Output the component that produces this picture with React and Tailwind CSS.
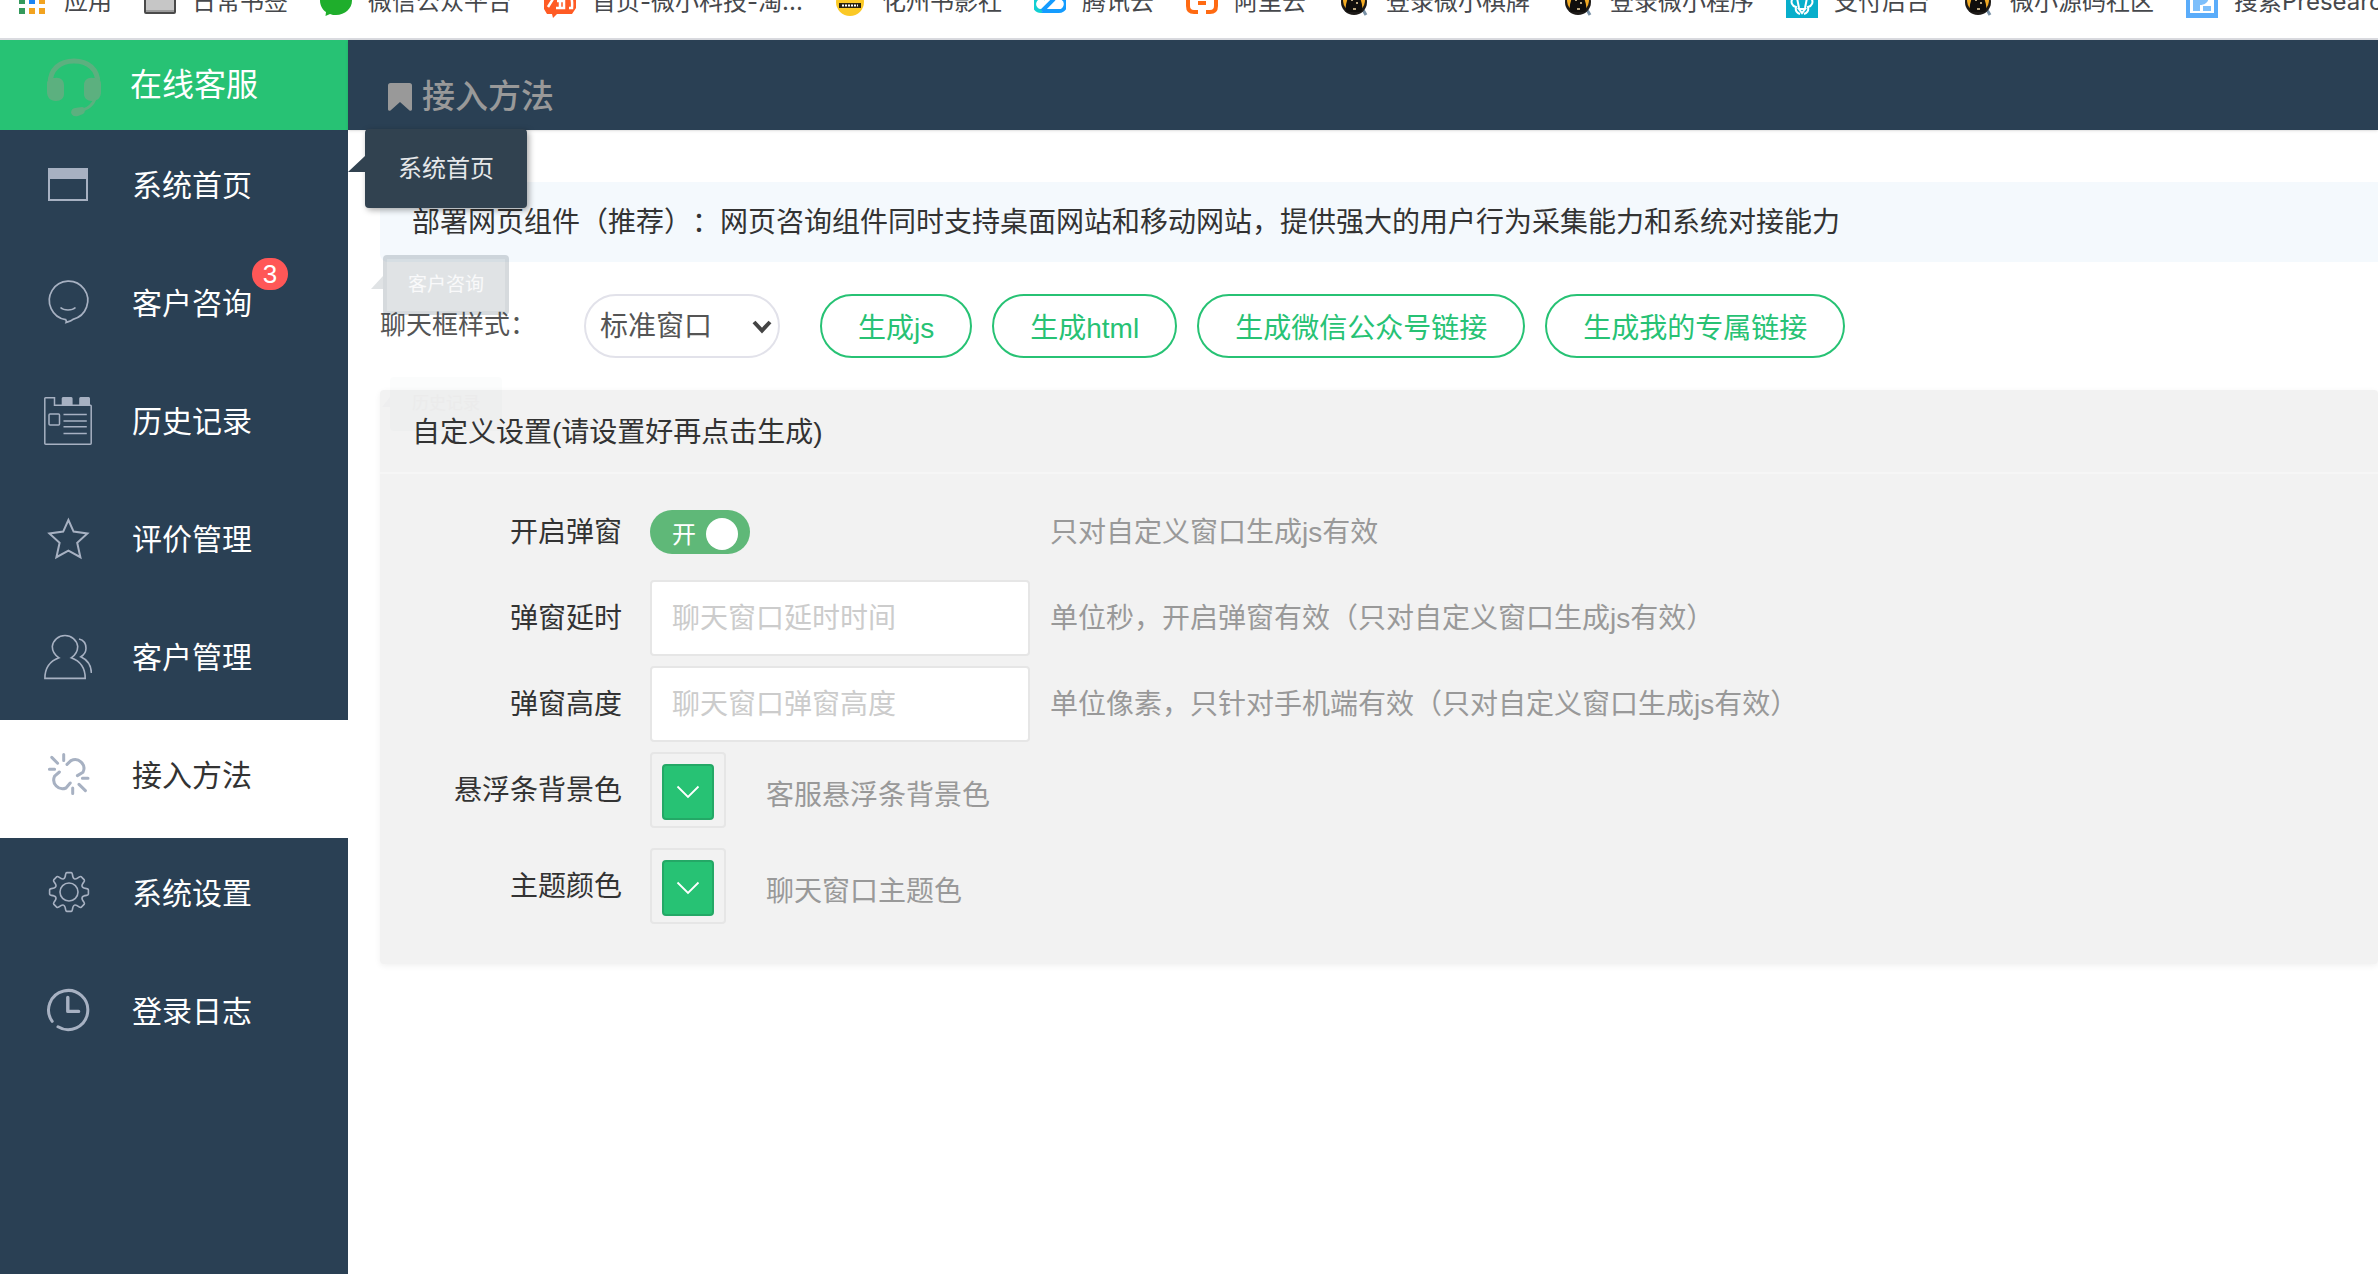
import { useState } from 'react'

const FORM_ROW = 'flex items-center'
const FORM_LABEL = 'w-[242px] shrink-0 pt-0.5 text-right text-[#333]'

// eight-tooth gear outline around (25, 23)
function gearPath() {
  const pt = (x, y, a) => {
    const c = Math.cos(a)
    const s = Math.sin(a)
    return `${(25 + x * c - y * s).toFixed(2)} ${(23 + x * s + y * c).toFixed(2)}`
  }
  let d = `M${pt(-2.2, -19.4, 0)}`
  for (let k = 0; k < 8; k++) {
    const a = (k * Math.PI) / 4
    const b = ((k + 1) * Math.PI) / 4
    d += `L${pt(2.2, -19.4, a)}Q${pt(3.2, -19.2, a)} ${pt(3.4, -17.6, a)}`
    d += `C${pt(4, -12.5, a)} ${pt(-4, -12.5, b)} ${pt(-3.4, -17.6, b)}`
    d += `Q${pt(-3.2, -19.2, b)} ${pt(-2.2, -19.4, b)}`
  }
  return d + 'Z'
}

const NAV_ICONS = {
  home: (
    <g>
      <rect x="5" y="8" width="38" height="31" strokeWidth="2" />
      <rect x="4" y="7" width="40" height="11" fill="currentColor" stroke="none" />
    </g>
  ),
  chat: (
    <g strokeWidth="1.7">
      <path d="M21.6 40.6A19.2 19.4 0 1 1 29 40.3C27 42 25 42.4 22.2 43.4C22.6 42.3 22.3 41.6 21.6 40.6Z" />
      <path d="M16.5 28.5C20 31.8 28 31.8 31.5 28.5" />
    </g>
  ),
  history: (
    <g strokeWidth="1.5">
      <path d="M1.5 .8H10.5V8.2H46.5Q47.2 8.2 47.2 9V46.2Q47.2 47.2 46.2 47.2H1.8Q.8 47.2 .8 46.2V1.5Q.8 .8 1.5 .8Z" />
      <path d="M17.7 8V1.5Q17.7 0 19 0H27.3Q28.6 0 28.6 1.5V8ZM35.2 8V1.5Q35.2 0 36.5 0H44.8Q46 0 46 1.5V8Z" fill="currentColor" stroke="none" />
      <rect x="5" y="17" width="10.5" height="11" rx="1" />
      <path d="M19.5 17.4H42.8M19.5 24H42.8M19.5 29.8H42.8M19.5 36.4H42.8" />
    </g>
  ),
  star: (
    <path
      strokeWidth="2"
      d="M24.4 5L29.6 16.6L43.4 18.4L33.2 27.8L36.4 42.2L24.4 35.6L12.4 42.2L15.6 27.8L5.4 18.4L19.2 16.6Z"
    />
  ),
  users: (
    <g strokeWidth="1.6">
      <path d="M15 24.8C10.5 21.8 8.3 18.2 8.3 13.4A12.8 12.5 0 0 1 33.7 13.4C33.7 18.2 31.6 21.8 27.2 24.8C36 28 41.2 34.5 41.2 45.4H.9C.9 34.5 6.2 28 15 24.8Z" />
      <path d="M35 6C39.2 7 42 10.5 42 15.3C42 18.8 40.2 21.8 36.8 23.8C42.5 26.5 47.2 31.5 47.4 40" />
    </g>
  ),
  link: (
    <g strokeWidth="3" strokeLinecap="round">
      <path d="M19.7 3.6V9.4M7.8 6.4L13.6 12.2M5.4 18.3H10.6M38.4 27.3H44M28.7 37V42.4M35 33.4L41.4 39.6" />
      <path d="M23 13.4L27 9.6A8.8 8.8 0 0 1 39 21.2L33.4 24.6M15.4 21L10.6 25.2A8.8 8.8 0 0 0 22 37L26.2 32" />
    </g>
  ),
  gear: (
    <g strokeWidth="1.6">
      <path d={gearPath()} />
      <circle cx="25" cy="23" r="9" />
    </g>
  ),
  clock: (
    <g strokeWidth="3" strokeLinecap="round">
      <path d="M8.2 34.4A19.6 19.6 0 1 1 14 39.8" />
      <path d="M23.8 10.4V24.4H34.6" strokeWidth="3.4" strokeLinejoin="round" />
    </g>
  ),
}

const NAV_ITEMS = [
  { icon: 'home', label: '系统首页' },
  { icon: 'chat', label: '客户咨询', badge: 3 },
  { icon: 'history', label: '历史记录' },
  { icon: 'star', label: '评价管理' },
  { icon: 'users', label: '客户管理' },
  { icon: 'link', label: '接入方法', active: true },
  { icon: 'gear', label: '系统设置' },
  { icon: 'clock', label: '登录日志' },
]

const NAV_TIPS = {
  系统首页: {
    box: '-top-px ml-[17px] h-[79px] w-[162px] rounded-sm bg-[#314250] text-2xl text-[#e6e8ea] shadow-[2px_2px_6px_rgba(0,0,0,0.35)]',
    arrow: 'top-[27px] h-4 w-[17px] bg-[#314250]',
  },
  客户咨询: {
    box: 'top-[7px] ml-[35px] h-[60px] w-[126px] rounded-sm border-4 border-[#2f4050]/5 bg-[#2f4050]/15 text-[19px] text-white/80',
    arrow: 'top-[17px] mr-1 h-[13px] w-3 bg-[#2f4050]/15',
  },
  历史记录: {
    box: 'top-[11px] ml-[42px] h-[54px] w-[112px] rounded-sm bg-[#2f6050]/2 text-[17px] text-[#ebebeb]',
    arrow: 'top-5 h-2.5 w-2 bg-[#2f4050]/2',
  },
}

function NavTip({ label }) {
  const tip = NAV_TIPS[label]
  if (!tip) return null
  return (
    <span
      role="tooltip"
      className={`pointer-events-none absolute left-full z-10 flex items-center justify-center whitespace-nowrap ${tip.box}`}
    >
      <span className={`absolute right-full [clip-path:polygon(100%_0,100%_100%,0_100%)] ${tip.arrow}`} />
      {label}
    </span>
  )
}

function NavItem({ item }) {
  return (
    <li className="relative">
      <a
        href="#"
        aria-current={item.active ? 'page' : undefined}
        className={`flex h-[118px] items-center gap-10 pb-2 pl-11 text-3xl ${
          item.active ? 'bg-white text-[#333]' : 'text-white'
        }`}
      >
        <svg viewBox="0 0 48 48" fill="none" stroke="currentColor" className="size-12 shrink-0 text-[#a7b1c2]">
          {NAV_ICONS[item.icon]}
        </svg>
        <span className="pt-0.5">{item.label}</span>
      </a>
      {item.badge ? (
        <span className="absolute left-[252px] top-2.5 flex h-8 w-9 items-center justify-center rounded-2xl bg-[#ff5757] text-[26px] text-white">
          {item.badge}
        </span>
      ) : null}
      <NavTip label={item.label} />
    </li>
  )
}

function Sidebar() {
  return (
    <aside className="w-[348px] shrink-0 bg-[#2a4054]">
      <div className="flex h-[90px] items-center gap-7 bg-[#27c274] pl-[46px] pt-1 text-[32px] text-white">
        <svg viewBox="0 0 56 60" fill="none" className="h-[60px] w-14 text-[#5cb07f]">
          <path d="M4 27C4 12 14 4 28 4S52 12 52 27" stroke="currentColor" strokeWidth="5" />
          <path d="M9 21C14 20 18 23 18 28V37C18 41 15 44 10 44C4 44 1 40 1 35V27C1 23 4 21 9 21Z" fill="currentColor" />
          <path d="M47 21C42 20 38 23 38 28V37C38 41 41 44 46 44C52 44 55 40 55 35V27C55 23 52 21 47 21Z" fill="currentColor" />
          <path d="M49 42C47 47 43 51 37 53" stroke="currentColor" strokeWidth="3" />
          <path d="M29 51L36 50C39 50 40 55 37 57L32 59C24 61 23 52 29 51Z" fill="currentColor" />
        </svg>
        <span className="pb-1">在线客服</span>
      </div>
      <nav>
        <ul>
          {NAV_ITEMS.map((item) => (
            <NavItem key={item.label} item={item} />
          ))}
        </ul>
      </nav>
    </aside>
  )
}

const BOOKMARKS = [
  { icon: 'apps', label: '应用' },
  { icon: 'folder', label: '日常书签' },
  { icon: 'wechat', label: '微信公众平台' },
  { icon: 'taobao', label: '首页-微小科技-淘...', wide: true },
  { icon: 'books', label: '化州书影社' },
  { icon: 'tencent', label: '腾讯云' },
  { icon: 'aliyun', label: '阿里云' },
  { icon: 'ninja', label: '登录微小棋牌' },
  { icon: 'ninja', label: '登录微小程序' },
  { icon: 'lion', label: '支付后台' },
  { icon: 'ninja', label: '微小源码社区' },
  { icon: 'presearch', label: '搜索Presearch' },
]

const BOOKMARK_ICONS = {
  apps: (
    <g>
      <path d="M3 12h6v6H3zM3 22h6v6H3z" fill="#34995c" />
      <path d="M13 12h6v6h-6z" fill="#1a84f5" />
      <path d="M23 12h6v6h-6zM13 22h6v6h-6zM23 22h6v6h-6z" fill="#f2a320" />
    </g>
  ),
  folder: (
    <g>
      <path d="M1 6h30v20q0 1-1 1H2q-1 0-1-1z" fill="#c6c6c6" stroke="#4a4a4a" strokeWidth="2" />
      <path d="M2 24h28v2H2z" fill="#9b9b9b" />
    </g>
  ),
  wechat: <path d="M16 0C7 0 0 6 0 14.500C0 20 3 24 6 26L5.500 30L10 28C12 29 14 29 16 29C25 29 32 22.500 32 14.500S25 0 16 0Z" fill="#1fae2c" />,
  taobao: (
    <g>
      <path d="M4 0h24l4 5v17l-4 6H13l-4 4l-1-4H3l-3-5V4z" fill="#ff5b24" />
      <path d="M5 10l4 3l-5 8M11 12l9-2M13 15h7v7h-8M16 11v10M23 10q6-2 5 12h-3" fill="none" stroke="#fff" strokeWidth="2.500" />
    </g>
  ),
  books: (
    <g>
      <circle cx="16" cy="16" r="14" fill="#fbc926" />
      <path d="M5 9h22v4H5zM5 17h22v5H5z" fill="#292313" />
      <path d="M8 19.500h16" stroke="#fff" strokeWidth="2" strokeDasharray="2 1" />
    </g>
  ),
  tencent: (
    <g fill="none" strokeWidth="4">
      <path d="M12 13A7 7 0 1 0 8 25" stroke="#12cfd2" />
      <path d="M8 25L19 14A7 7 0 1 1 24 25H8" stroke="#149cff" />
    </g>
  ),
  aliyun: (
    <path d="M12 4H8Q2 4 2 10V20Q2 26 8 26H12M20 4H24Q30 4 30 10V20Q30 26 24 26H20M12 17H20" fill="none" stroke="#ff6a12" strokeWidth="4" />
  ),
  ninja: (
    <g>
      <path d="M24 22L28 29" stroke="#7890a5" strokeWidth="3" />
      <ellipse cx="16" cy="16" rx="13" ry="13" fill="#1d1a18" />
      <ellipse cx="16" cy="14" rx="11" ry="12" fill="#f3ab23" />
      <path d="M8 0h16l-2 12q4 10 1 14h-14q-3-4 1-14z" fill="#100e0c" />
      <path d="M13 14h2M18 17h2M15 23h3" stroke="#f1d7a2" strokeWidth="1.500" />
    </g>
  ),
  lion: (
    <g>
      <path d="M0 0h32v32H0z" fill="#08aecb" />
      <path d="M7 12C4 16 6 20 10 21C9 25 11 27 14 28M25 12C28 16 26 20 22 21C23 25 21 27 18 28M11 12l2 10M21 12l-2 10M13 23h6l-3 4z" fill="none" stroke="#fff" strokeWidth="2" />
    </g>
  ),
  presearch: (
    <g>
      <path d="M0 0h32v32H0z" fill="#5aacfa" />
      <path d="M4 4h24v23H4z" fill="#fff" />
      <path d="M7 4v21h7v-6c11 0 12-14 0-15zM17 20h8v5h-8z" fill="#7dbffb" />
    </g>
  ),
}

function BookmarksBar() {
  return (
    <div className="flex h-10 items-end overflow-hidden border-b-2 border-[#dadbe0] bg-white pb-5 pl-4">
      <ul className="flex h-8 items-center gap-8 whitespace-nowrap font-['Inter','Noto_Sans_CJK_SC',sans-serif] text-2xl leading-8 text-[#46484c]">
        {BOOKMARKS.map((b) => (
          <li key={b.label} className="shrink-0">
            <a href="#" className="flex items-center gap-4">
              <svg viewBox="0 0 32 32" className="size-8">
                {BOOKMARK_ICONS[b.icon]}
              </svg>
              <span className={b.wide ? 'w-[210px]' : ''}>{b.label}</span>
            </a>
          </li>
        ))}
      </ul>
    </div>
  )
}

function ColorPicker({ id }) {
  return (
    <div className="h-[76px] rounded-sm border-2 border-[#e6e6e6] px-2.5 pt-2.5">
      <button
        id={id}
        type="button"
        className="flex h-14 w-[52px] items-center justify-center rounded border-2 border-[#24a866] bg-[#27c274]"
      >
        <svg viewBox="0 0 24 14" fill="none" stroke="#fff" strokeWidth="1.800" className="h-3.5 w-6">
          <path d="M1.500 1.500L12 12L22.500 1.500" />
        </svg>
      </button>
    </div>
  )
}

function TextRow({ id, label, placeholder, hint }) {
  return (
    <div className={FORM_ROW}>
      <label htmlFor={id} className={FORM_LABEL}>
        {label}
      </label>
      <input
        id={id}
        type="text"
        placeholder={placeholder}
        className="ml-7 h-[76px] w-[380px] rounded-sm border-2 border-[#e6e6e6] bg-white px-5 pt-0.5 placeholder:text-[#ccc]"
      />
      <span className="ml-5 pt-0.5 text-[#999]">{hint}</span>
    </div>
  )
}

function ColorRow({ id, label, hint }) {
  return (
    <div className={FORM_ROW}>
      <label htmlFor={id} className={FORM_LABEL}>
        {label}
      </label>
      <div className="ml-7">
        <ColorPicker id={id} />
      </div>
      <span className="ml-10 pt-3 text-[#999]">{hint}</span>
    </div>
  )
}

function SettingsPanel() {
  const [popup, setPopup] = useState(true)
  return (
    <section className="mt-8 rounded bg-[#f2f2f2] pb-10 text-[28px] text-[#333] shadow-[0_2px_6px_rgba(0,0,0,0.06)]">
      <h2 className="flex h-[84px] items-center border-b-2 border-[#f6f6f6] px-8 pt-1">自定义设置(请设置好再点击生成)</h2>
      <div className="space-y-2.5 pt-5">
        <div className={`${FORM_ROW} h-[76px]`}>
          <label htmlFor="popup" className={FORM_LABEL}>
            开启弹窗
          </label>
          <label
            className={`ml-7 flex h-11 w-[100px] cursor-pointer items-center gap-2.5 rounded-full pl-[22px] text-2xl text-white ${
              popup ? 'bg-[#5fb878]' : 'bg-[#d2d2d2]'
            }`}
          >
            <input
              id="popup"
              type="checkbox"
              role="switch"
              checked={popup}
              onChange={(e) => setPopup(e.target.checked)}
              className="sr-only"
            />
            <span className="pt-1.5">{popup ? '开' : '关'}</span>
            <span className="mt-1 size-8 rounded-full bg-white" />
          </label>
          <span className="ml-[300px] pt-0.5 text-[#999]">只对自定义窗口生成js有效</span>
        </div>
        <TextRow
          id="delay"
          label="弹窗延时"
          placeholder="聊天窗口延时时间"
          hint="单位秒，开启弹窗有效（只对自定义窗口生成js有效）"
        />
        <TextRow
          id="height"
          label="弹窗高度"
          placeholder="聊天窗口弹窗高度"
          hint="单位像素，只针对手机端有效（只对自定义窗口生成js有效）"
        />
        <div className="space-y-5">
          <ColorRow id="bar-color" label="悬浮条背景色" hint="客服悬浮条背景色" />
          <ColorRow id="theme-color" label="主题颜色" hint="聊天窗口主题色" />
        </div>
      </div>
    </section>
  )
}

const GENERATE_ACTIONS = ['生成js', '生成html', '生成微信公众号链接', '生成我的专属链接']

export default function App() {
  return (
    <div className="flex min-h-screen flex-col bg-white font-['Liberation_Sans','Noto_Sans_CJK_SC',sans-serif]">
      <BookmarksBar />
      <div className="flex flex-1">
        <Sidebar />
        <div className="min-w-0 flex-1">
          <header className="flex h-[90px] items-center gap-2.5 bg-[#2a4054] pl-10 pt-6 text-[#999] shadow-sm">
            <svg viewBox="0 0 24 28" fill="currentColor" className="h-7 w-6">
              <path d="M2.500 0H21.500Q24 0 24 2.500V26.500Q23.500 28.500 21.500 27.500L12 19L2.500 27.500Q.5 28.500 0 26.500V2.500Q0 0 2.500 0Z" />
            </svg>
            <h1 className="text-[33px] font-medium">接入方法</h1>
          </header>
          <main className="pl-8 pt-[52px]">
            <p className="flex h-20 items-center rounded-l-lg bg-[#f4f9fd] px-8 pt-0.5 text-[28px] text-[#333] [text-spacing-trim:space-all]">
              部署网页组件（推荐）：网页咨询组件同时支持桌面网站和移动网站，提供强大的用户行为采集能力和系统对接能力
            </p>
            <div className="mt-8 flex items-center gap-5 text-[28px]">
              <label htmlFor="style" className="w-[184px] pb-0.5 text-[26px] text-[#555]">
                聊天框样式：
              </label>
              <div className="relative mr-5">
                <select
                  id="style"
                  className="h-16 w-[196px] appearance-none rounded-full border-2 border-[#e2e2ea] bg-white px-3.5 pt-0.5 text-[#555]"
                >
                  <option>标准窗口</option>
                </select>
                <svg
                  viewBox="0 0 20 14"
                  fill="none"
                  stroke="#444"
                  strokeWidth="4"
                  className="pointer-events-none absolute right-2 top-[26px] h-3.5 w-5"
                >
                  <path d="M2 2L10 10.500L18 2" />
                </svg>
              </div>
              {GENERATE_ACTIONS.map((text) => (
                <button
                  key={text}
                  type="button"
                  className="h-16 rounded-full border-2 border-[#27c274] px-9 pt-1.5 text-[#27c274]"
                >
                  {text}
                </button>
              ))}
            </div>
            <SettingsPanel />
          </main>
        </div>
      </div>
    </div>
  )
}
